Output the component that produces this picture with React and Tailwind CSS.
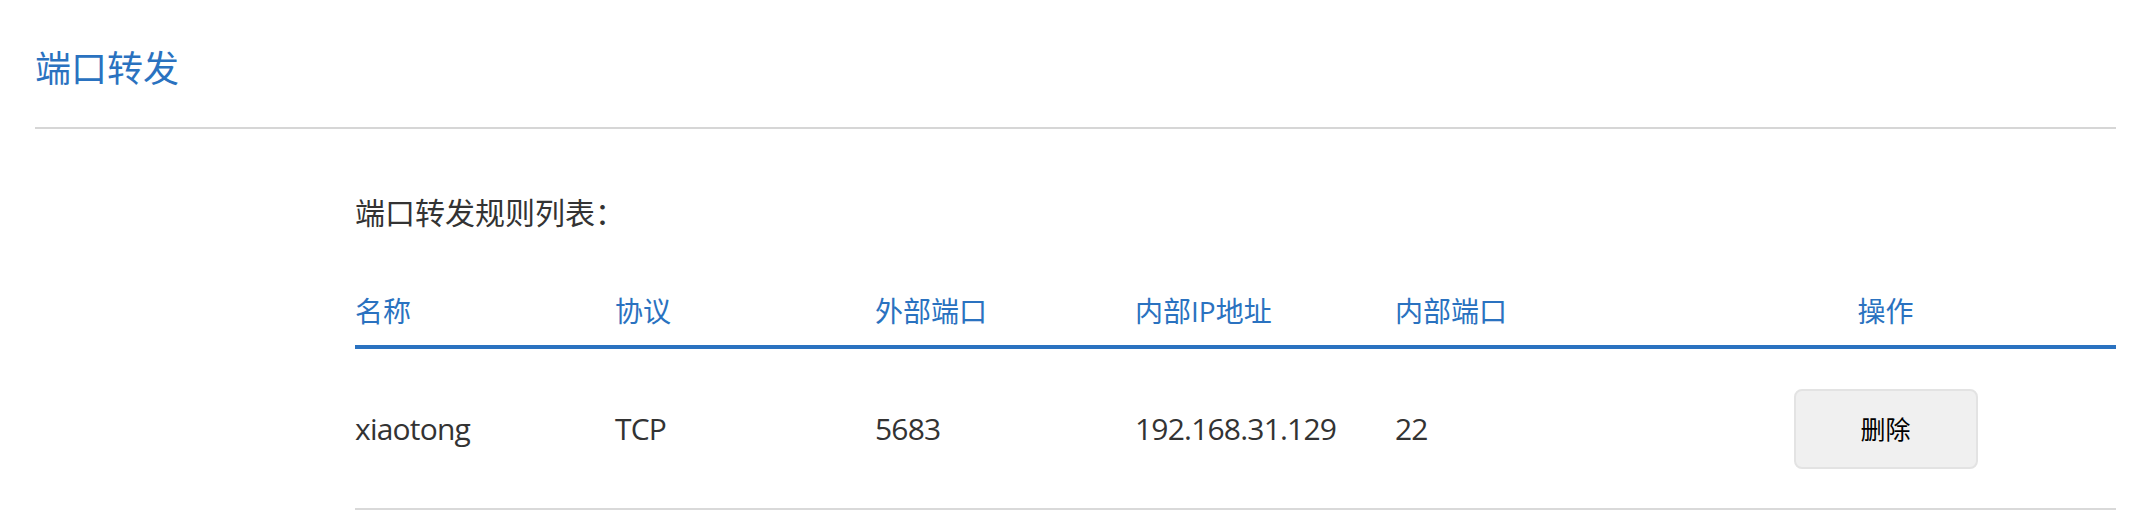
export default function App() {
  const font = { fontFamily: '"Open Sans", "Noto Sans CJK SC", sans-serif' };
  const cols = "grid grid-cols-[260px_260px_260px_260px_260px_1fr]";
  return (
    <div className="bg-white w-[2148px] h-[513px] pl-[35px] pr-[32px] overflow-hidden" style={font}>
      <div className="pt-[45px] pb-[34px] border-b-2 border-[#d6d6d6]">
        <h1 className="text-[36px] leading-[48px] text-[#2a72c0] font-normal">端口转发</h1>
      </div>
      <div className="ml-[320px]">
        <div className="mt-[64px] text-[30px] leading-[40px] text-[#333333]">端口转发规则列表：</div>
        <div className={`${cols} mt-[58px] pb-[14px] border-b-4 border-[#2a72c0] text-[28px] leading-[40px] text-[#2a72c0]`}>
          <div>名称</div>
          <div>协议</div>
          <div>外部端口</div>
          <div>内部IP地址</div>
          <div>内部端口</div>
          <div className="text-center">操作</div>
        </div>
        <div className={`${cols} h-[161px] items-center border-b-2 border-[#d9d9d9] text-[30px] leading-[40px] tracking-[-0.8px] text-[#333333]`}>
          <div>xiaotong</div>
          <div>TCP</div>
          <div>5683</div>
          <div>192.168.31.129</div>
          <div>22</div>
          <div className="flex justify-center">
            <button className="w-[184px] h-[80px] bg-[#f0f0f0] border-2 border-[#e3e3e3] rounded-[8px] text-[25px] tracking-normal text-black">删除</button>
          </div>
        </div>
      </div>
    </div>
  );
}
